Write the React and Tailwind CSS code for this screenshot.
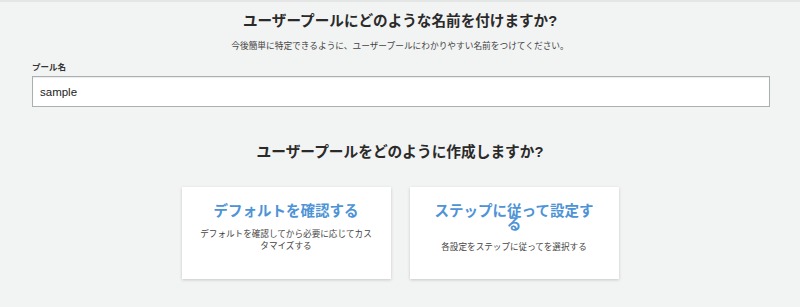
import React, { useState } from 'react';

const cards = [
  { title: 'デフォルトを確認する', desc: 'デフォルトを確認してから必要に応じてカスタマイズする' },
  { title: 'ステップに従って設定する', desc: '各設定をステップに従ってを選択する' },
];

export default function App() {
  const [name, setName] = useState('sample');

  return (
    <div className="min-h-screen bg-[#f2f3f3] border-t-2 border-[#e4e6e6] font-['Liberation_Sans','Noto_Sans_CJK_JP',sans-serif] text-[#333]">
      {/* Pool name */}
      <div className="pt-[9px] text-center">
        <h1 className="text-[14.6px] leading-[20px] font-bold text-[#2a2a2a]">ユーザープールにどのような名前を付けますか?</h1>
        <p className="mt-[9px] text-[8.7px] leading-[12px] text-[#444]">今後簡単に特定できるように、ユーザープールにわかりやすい名前をつけてください。</p>
      </div>
      <div className="ml-[32px] mr-[30px] mt-[9px]">
        <label className="block text-[8.5px] leading-[12px] font-bold text-[#333] mb-[3px]">プール名</label>
        <input
          value={name}
          onChange={e => setName(e.target.value)}
          className="w-full h-[31px] px-[7px] bg-white border border-[#aab0b0] text-[11.5px] text-[#222] outline-none shadow-[inset_0_1px_1px_rgba(0,0,0,0.08)]"
        />
      </div>

      {/* Create method */}
      <h2 className="mt-[35px] text-center text-[14.7px] leading-[20px] font-bold text-[#2a2a2a]">ユーザープールをどのように作成しますか?</h2>
      <div className="mt-[25px] flex justify-center gap-[19px]">
        {cards.map(c => (
          <button key={c.title} type="button" className="w-[209px] h-[92px] bg-white shadow-[0_1px_3px_rgba(0,0,0,0.18)] px-[18px] pt-[18px] text-center flex flex-col items-center justify-start">
            <div className="text-[14.5px] leading-[13px] font-bold text-[#4d93d6]">{c.title}</div>
            <div className="mt-[10px] text-[8.6px] leading-[12px] text-[#444]">{c.desc}</div>
          </button>
        ))}
      </div>
    </div>
  );
}
